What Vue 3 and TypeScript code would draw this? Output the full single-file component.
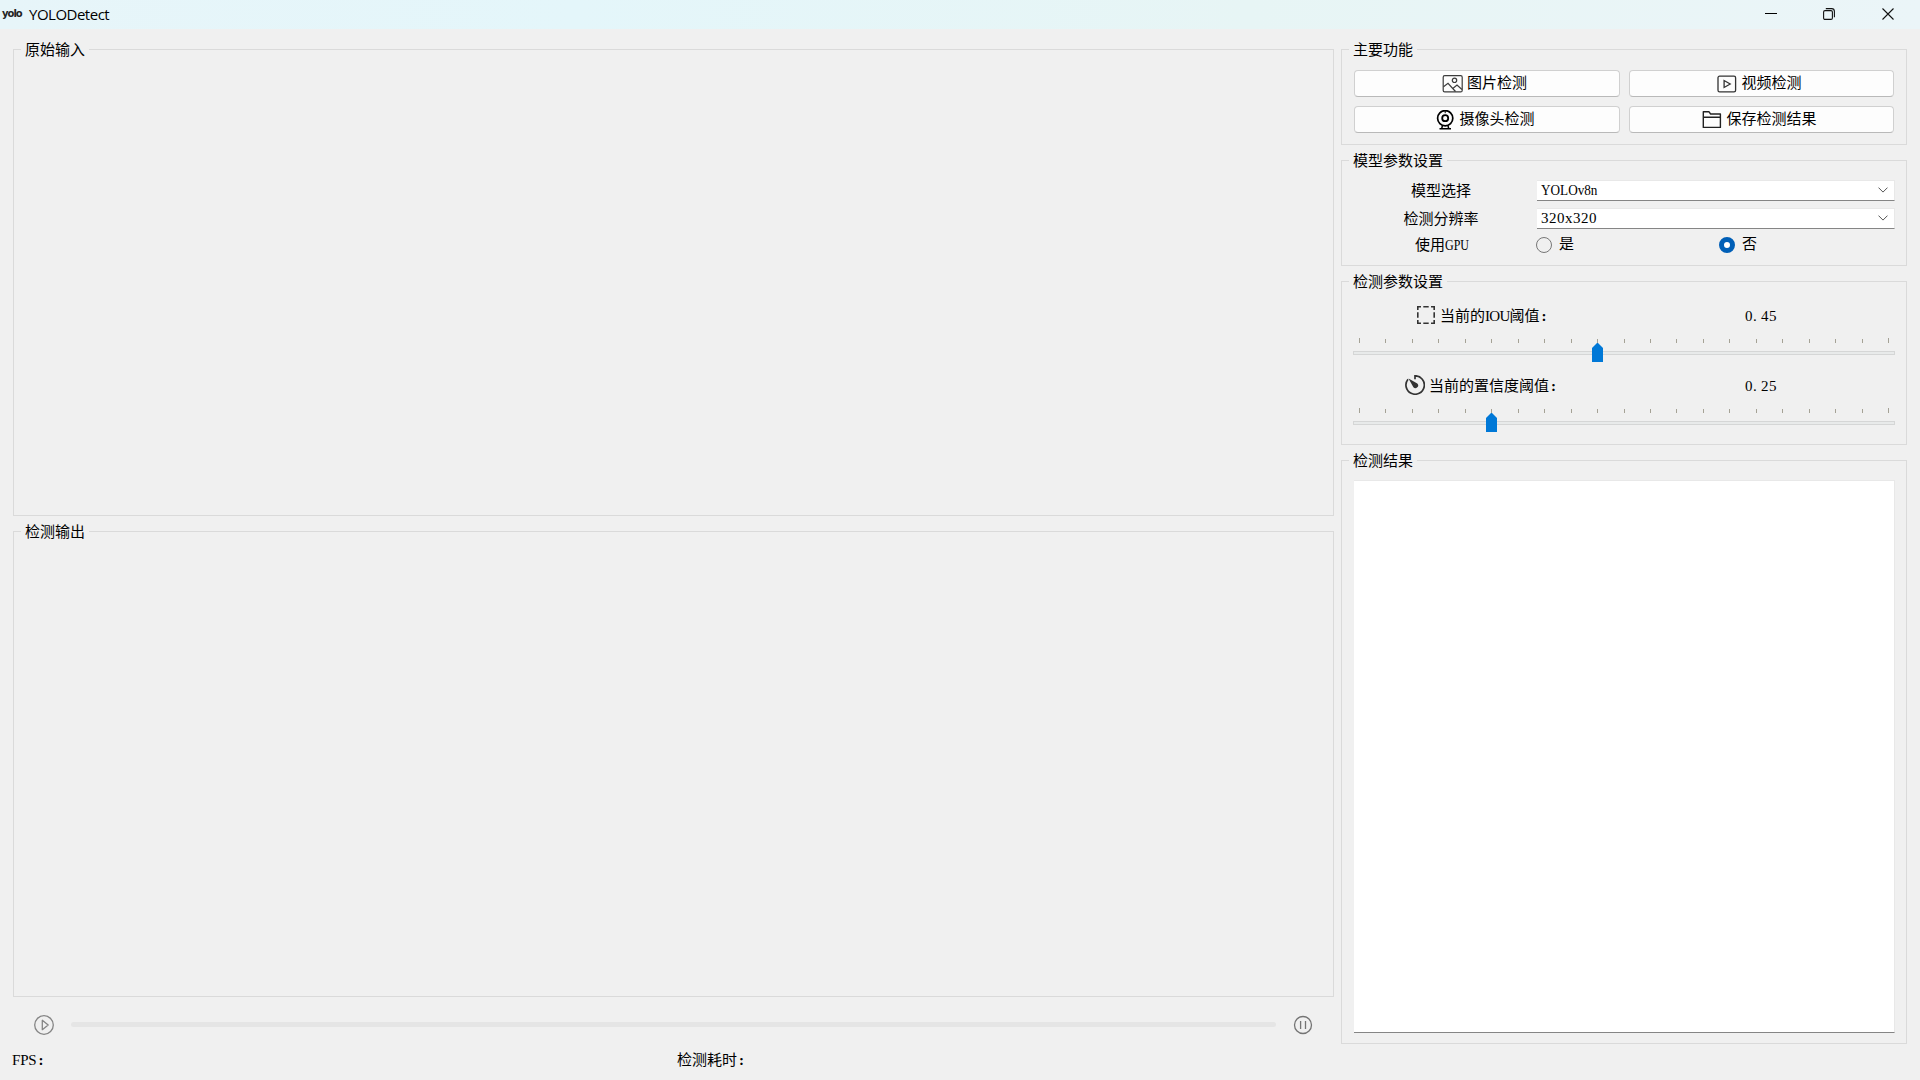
<script setup lang="ts">
interface SliderRow {
  key: string
  before: string
  latin: string
  after: string
  value: string
  percent: number
}

const sliders: SliderRow[] = [
  { key: 'iou', before: '当前的', latin: 'IOU', after: '阈值', value: '0.45', percent: 45 },
  { key: 'conf', before: '当前的置信度阈值', latin: '', after: '', value: '0.25', percent: 25 },
]

const ticks: number[] = Array.from({ length: 21 }, (_, i) => Math.round(i * 26.45))
const handleLeft = (percent: number): string => `${Math.round(percent * 5.29) + 1}px`
</script>

<template>
  <div class="window">
    <header class="titlebar">
      <span class="logo">yolo</span>
      <span class="app-name">YOLODetect</span>
      <div class="controls">
        <svg width="12" height="12" viewBox="0 0 12 12"><path d="M0 5.5H12" stroke="#000" fill="none" /></svg>
        <svg width="12" height="12" viewBox="0 0 12 12" fill="none" stroke="#111" stroke-width="1.1">
          <rect x="0.6" y="2.6" width="8.8" height="8.8" rx="1.4" />
          <path d="M2.8 0.6H8.6Q11.4 0.6 11.4 3.4V9.2" />
        </svg>
        <svg width="12" height="12" viewBox="0 0 12 12"><path d="M0.5 0.5L11.5 11.5M11.5 0.5L0.5 11.5" stroke="#111" stroke-width="1.1" fill="none" /></svg>
      </div>
    </header>

    <div class="body">
      <main class="left">
        <section class="group input"><span class="title">原始输入</span></section>
        <section class="group output"><span class="title">检测输出</span></section>
        <div class="player">
          <svg class="play" width="20" height="20" viewBox="0 0 20 20" fill="none" stroke="#858585" stroke-width="1.3">
            <circle cx="10" cy="10" r="9.3" />
            <path d="M8.3 5.3V14.7L14.2 10Z" stroke-linejoin="round" />
          </svg>
          <div class="progress"></div>
          <svg width="20" height="20" viewBox="0 0 20 20" fill="none" stroke="#747474" stroke-width="1.3">
            <circle cx="10" cy="10" r="8.5" />
            <path d="M7.6 6V14M12.5 6V14" />
          </svg>
        </div>
        <footer class="status">
          <span class="fps"><span class="en fps-text">FPS</span><span class="colon">:</span></span>
          <span>检测耗时<span class="colon">:</span></span>
        </footer>
      </main>

      <aside class="right">
        <section class="group functions">
          <span class="title">主要功能</span>
          <button>
            <svg width="22" height="20" viewBox="0 0 22 20" fill="none" stroke="#3c3c3c" stroke-width="1.2">
              <rect x="1.2" y="1.7" width="19" height="16.2" rx="1.5" />
              <circle cx="12.5" cy="6.3" r="2.2" />
              <path d="M1.5 12.8L6 9.3L13.5 17.5M10.8 14.5L15 11L20 15.5" />
            </svg>
            <span>图片检测</span>
          </button>
          <button>
            <svg width="22" height="20" viewBox="0 0 22 20" fill="none" stroke="#333" stroke-width="1.3">
              <rect x="2" y="2.2" width="17.6" height="15.6" rx="1.6" />
              <path d="M8.1 6.5V13.5L14.2 10Z" />
            </svg>
            <span>视频检测</span>
          </button>
          <button>
            <svg width="22" height="20" viewBox="0 0 22 20" fill="none" stroke="#000">
              <circle cx="11.2" cy="8.2" r="7.6" stroke-width="1.7" />
              <circle cx="11.2" cy="8.2" r="3" stroke-width="1.8" />
              <path d="M11.2 0.7V3.2" stroke-width="1" />
              <path d="M8.4 15.7L7.7 18.7M14 15.7L14.7 18.7M5.5 18.8H17" stroke-width="1.5" />
            </svg>
            <span>摄像头检测</span>
          </button>
          <button>
            <svg width="22" height="20" viewBox="0 0 22 20" fill="none" stroke="#222" stroke-width="1.4" stroke-linejoin="round">
              <path d="M2.3 17.4V1.7H7.9L9.6 4H19.4V17.4ZM2.3 7.2H19.4" />
            </svg>
            <span>保存检测结果</span>
          </button>
        </section>

        <section class="group model">
          <span class="title">模型参数设置</span>
          <div class="row">
            <label>模型选择</label>
            <div class="combo">
              <span class="en yolo-text">YOLOv8n</span>
              <svg width="10" height="6" viewBox="0 0 10 6"><path d="M0.5 0.6L5 5.1L9.5 0.6" fill="none" stroke="#555" /></svg>
            </div>
          </div>
          <div class="row">
            <label>检测分辨率</label>
            <div class="combo">
              <span class="en digits">320x320</span>
              <svg width="10" height="6" viewBox="0 0 10 6"><path d="M0.5 0.6L5 5.1L9.5 0.6" fill="none" stroke="#555" /></svg>
            </div>
          </div>
          <div class="row radios">
            <label>使用<span class="en gpu-text">GPU</span></label>
            <div class="radio"><i></i><span>是</span></div>
            <div class="radio on"><i></i><span>否</span></div>
          </div>
        </section>

        <section class="group params">
          <span class="title">检测参数设置</span>
          <div v-for="s in sliders" :key="s.key" class="param">
            <div class="caption">
              <div class="name" :class="s.key">
                <svg v-if="s.key === 'iou'" width="20" height="20" viewBox="0 0 20 20" fill="none" stroke="#333" stroke-width="1.6">
                  <path d="M1.8 5V1.8H5M15 1.8H18.2V5M18.2 15V18.2H15M5 18.2H1.8V15M7.3 1.8H12.7M7.3 18.2H12.7M1.8 7.3V12.7M18.2 7.3V12.7" />
                </svg>
                <svg v-else width="20" height="20" viewBox="0 0 20 20" fill="none" stroke="#333" stroke-width="1.7">
                  <path d="M10 4.2V0.8A9.2 9.2 0 1 1 3 4.2" />
                  <path d="M3.5 3.5L12.3 8.4A2.7 2.7 0 0 1 8.4 12.3Z" fill="#333" stroke="none" />
                </svg>
                <span>{{ s.before }}<span v-if="s.latin" class="en iou-text">{{ s.latin }}</span>{{ s.after }}<span class="colon">:</span></span>
              </div>
              <div class="value en digits">{{ s.value.slice(0, 1) }}<span class="dot">.</span>{{ s.value.slice(2) }}</div>
            </div>
            <div class="slider">
              <div class="ticks"><i v-for="t in ticks" :key="t" :style="{ left: t + 'px' }"></i></div>
              <div class="track"></div>
              <svg class="handle" :style="{ left: handleLeft(s.percent) }" width="11" height="19" viewBox="0 0 11 19"><path d="M0 5L5 0H6L11 5V19H0Z" fill="#0078d7" /></svg>
            </div>
          </div>
        </section>

        <section class="group results">
          <span class="title">检测结果</span>
          <div class="textarea"></div>
        </section>
      </aside>
    </div>
  </div>
</template>

<style>
body {
  background: #f0f0f0;
}
</style>

<style scoped>
* {
  box-sizing: border-box;
}
.window {
  width: 1920px;
  height: 1080px;
  display: flex;
  flex-direction: column;
  overflow: hidden;
  background: #f0f0f0;
  color: #000;
  font: 15px/20px "Noto Sans CJK SC", sans-serif;
}
.titlebar {
  height: 29px;
  display: flex;
  align-items: center;
  background: linear-gradient(90deg, #e7f5f9, #e4f6fa 30%, #e7f5f5 65%, #ebf5f8);
}
.logo {
  width: 29px;
  padding: 0 0 2px 2px;
  font: bold 10px/12px "DejaVu Sans", sans-serif;
  letter-spacing: -1px;
  color: #222;
}
.app-name {
  padding-bottom: 2px;
  font: 15px/20px "Open Sans", sans-serif;
  letter-spacing: -0.5px;
}
.controls {
  margin-left: auto;
  padding: 0 26px 1px 0;
  display: flex;
  gap: 47px;
}
.controls svg:first-child {
  margin-right: -1px;
}
.body {
  flex: 1;
  display: flex;
  padding-top: 20px;
}
.left {
  width: 1321px;
  margin-left: 13px;
}
.right {
  width: 566px;
  margin-left: 7px;
}
.group {
  position: relative;
  border: 1px solid #dadada;
}
.title {
  position: absolute;
  top: -11.5px;
  left: 7px;
  padding: 0 4px;
  background: #f0f0f0;
  white-space: nowrap;
}
.input {
  height: 467px;
}
.output {
  height: 466px;
  margin-top: 15px;
}
.player {
  display: flex;
  align-items: center;
  height: 20px;
  margin: 18px 20px 0 21px;
}
.progress {
  width: 1205px;
  height: 5px;
  margin: 0 17px 1px;
  border-radius: 3px;
  background: #e5e5e5;
}
.status {
  display: flex;
  margin-top: 14px;
  margin-left: -1px;
}
.fps {
  width: 665px;
}
.en {
  font-family: "Liberation Serif", serif;
  font-size: 15px;
}
.fps-text {
  letter-spacing: -0.2px;
}
.yolo-text {
  width: 56px;
  white-space: nowrap;
  transform: scaleX(0.88);
  transform-origin: left;
}
.iou-text {
  letter-spacing: -0.7px;
}
.gpu-text {
  display: inline-block;
  width: 23px;
  transform: scaleX(0.8);
  transform-origin: left;
}
.digits {
  letter-spacing: 0.5px;
}
.colon {
  display: inline-block;
  width: 8px;
  padding-left: 1px;
  text-align: center;
  font: bold 15px/16px "Liberation Serif", serif;
}
.dot {
  display: inline-block;
  width: 8px;
}
.functions {
  height: 96px;
  padding: 20px 11px 0 12px;
  display: grid;
  grid-template-columns: 266px 265px;
  grid-auto-rows: 27px;
  gap: 9px;
}
button {
  display: flex;
  align-items: center;
  justify-content: center;
  gap: 3px;
  padding: 0 5px 0 0;
  border: 1px solid #d0d0d0;
  border-bottom-color: #b9b9b9;
  border-radius: 4px;
  background: #fdfdfd;
  color: #000;
  font: inherit;
}
button span,
.radio span {
  padding-bottom: 3px;
}
.model {
  height: 106px;
  margin-top: 15px;
  padding: 19px 11px 0 12px;
}
.row {
  display: flex;
  align-items: center;
  height: 21px;
  margin-bottom: 7px;
}
.row label {
  flex: none;
  width: 175px;
  margin-right: 8px;
  padding: 0 1px 2px 0;
  text-align: center;
}
.combo {
  width: 358px;
  height: 21px;
  display: flex;
  align-items: center;
  justify-content: space-between;
  padding: 0 6px 1px 4px;
  border: 1px solid #e8e8e8;
  border-left: 0;
  border-bottom-color: #858585;
  background: #fff;
}
.radios {
  margin-top: -2px;
}
.radios label {
  padding: 0;
}
.radio {
  flex: none;
  width: 183px;
  display: flex;
  align-items: center;
  gap: 7px;
  margin-left: -1px;
  margin-right: 1px;
}
.radio i {
  width: 16px;
  height: 16px;
  border: 1px solid #777;
  border-radius: 50%;
}
.radio.on i {
  border: 5px solid #005fb7;
  background: #fff;
}
.params {
  height: 164px;
  margin-top: 15px;
  padding: 23px 11px 0 11px;
}
.param {
  height: 70px;
}
.caption {
  display: flex;
  height: 20px;
}
.name {
  display: flex;
  gap: 4px;
  white-space: nowrap;
  width: 329px;
}
.name > span {
  line-height: 19px;
}
.iou {
  margin-left: 63px;
}
.conf {
  margin-left: 52px;
  width: 340px;
}
.value {
  line-height: 22px;
}
.slider {
  position: relative;
  height: 44px;
  padding-top: 13px;
}
.ticks {
  position: relative;
  height: 5px;
  margin-left: 6px;
}
.ticks i {
  position: absolute;
  top: 1px;
  width: 1px;
  height: 4px;
  background: #a5a296;
}
.ticks i:first-child,
.ticks i:last-child {
  top: 0;
  height: 5px;
}
.track {
  height: 4px;
  margin-top: 8px;
  border: 1px solid #d5d6d6;
  background: #e8eaea;
}
.handle {
  position: absolute;
  top: 18px;
}
.results {
  height: 584px;
  margin-top: 15px;
  padding: 19px 11px 0 12px;
}
.textarea {
  height: 553px;
  border: 1px solid #e8e8e8;
  border-left: 0;
  border-bottom-color: #858585;
  background: #fff;
}
</style>
